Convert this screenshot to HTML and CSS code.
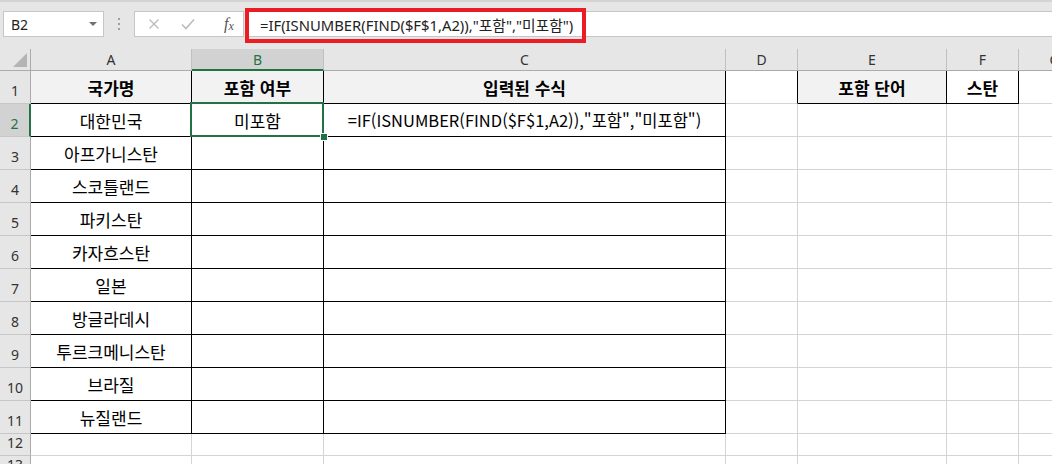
FILE: index.html
```html
<!DOCTYPE html>
<html lang="ko">
<head>
<meta charset="utf-8">
<link rel="stylesheet" href="styles.css">
</head>
<body>
<div class="app">
  <div class="fbar">
    <div class="namebox"><span class="nb-text">B2</span><span class="nb-arrow"></span></div>
    <div class="grip"><i></i><i></i><i></i></div>
    <div class="btns">
      <svg class="ic" width="12" height="12" viewBox="0 0 12 12"><path d="M1.5 1.5L10.5 10.5M10.5 1.5L1.5 10.5" stroke="#bcbcbc" stroke-width="1.4" fill="none"/></svg>
      <svg class="ic" width="14" height="12" viewBox="0 0 14 12"><path d="M1 6.5L5 10.5L13 1.5" stroke="#bcbcbc" stroke-width="1.6" fill="none"/></svg>
      <span class="fx">f<sub>x</sub></span>
    </div>
    <div class="finput"><span class="ftext">=IF(ISNUMBER(FIND($F$1,A2)),"포함","미포함")</span></div>
    <div class="hl"></div>
  </div>
  <div class="sheet">
    <div class="row hdr">
      <div class="corner"><span class="tri"></span></div>
      <div class="ch">A</div><div class="ch sel">B</div><div class="ch">C</div><div class="ch">D</div><div class="ch">E</div><div class="ch">F</div><div class="ch">G</div>
    </div>
    <div class="row">
      <div class="rh">1</div>
      <div class="c t th">국가명</div><div class="c t th">포함 여부</div><div class="c t th">입력된 수식</div><div class="c br"></div><div class="c t th">포함 단어</div><div class="c t bold">스탄</div><div class="c"></div>
    </div>
    <div class="row">
      <div class="rh rsel">2</div>
      <div class="c t">대한민국</div><div class="c t active">미포함</div><div class="c t fml">=IF(ISNUMBER(FIND($F$1,A2)),"포함","미포함")</div><div class="c"></div><div class="c"></div><div class="c"></div><div class="c"></div>
    </div>
    <div class="row">
      <div class="rh">3</div>
      <div class="c t">아프가니스탄</div><div class="c t"></div><div class="c t"></div><div class="c"></div><div class="c"></div><div class="c"></div><div class="c"></div>
    </div>
    <div class="row">
      <div class="rh">4</div>
      <div class="c t">스코틀랜드</div><div class="c t"></div><div class="c t"></div><div class="c"></div><div class="c"></div><div class="c"></div><div class="c"></div>
    </div>
    <div class="row">
      <div class="rh">5</div>
      <div class="c t">파키스탄</div><div class="c t"></div><div class="c t"></div><div class="c"></div><div class="c"></div><div class="c"></div><div class="c"></div>
    </div>
    <div class="row">
      <div class="rh">6</div>
      <div class="c t">카자흐스탄</div><div class="c t"></div><div class="c t"></div><div class="c"></div><div class="c"></div><div class="c"></div><div class="c"></div>
    </div>
    <div class="row">
      <div class="rh">7</div>
      <div class="c t">일본</div><div class="c t"></div><div class="c t"></div><div class="c"></div><div class="c"></div><div class="c"></div><div class="c"></div>
    </div>
    <div class="row">
      <div class="rh">8</div>
      <div class="c t">방글라데시</div><div class="c t"></div><div class="c t"></div><div class="c"></div><div class="c"></div><div class="c"></div><div class="c"></div>
    </div>
    <div class="row">
      <div class="rh">9</div>
      <div class="c t">투르크메니스탄</div><div class="c t"></div><div class="c t"></div><div class="c"></div><div class="c"></div><div class="c"></div><div class="c"></div>
    </div>
    <div class="row">
      <div class="rh">10</div>
      <div class="c t">브라질</div><div class="c t"></div><div class="c t"></div><div class="c"></div><div class="c"></div><div class="c"></div><div class="c"></div>
    </div>
    <div class="row">
      <div class="rh">11</div>
      <div class="c t">뉴질랜드</div><div class="c t"></div><div class="c t"></div><div class="c"></div><div class="c"></div><div class="c"></div><div class="c"></div>
    </div>
    <div class="row short">
      <div class="rh">12</div>
      <div class="c"></div><div class="c"></div><div class="c"></div><div class="c"></div><div class="c"></div><div class="c"></div><div class="c"></div>
    </div>
    <div class="row short">
      <div class="rh">13</div>
      <div class="c"></div><div class="c"></div><div class="c"></div><div class="c"></div><div class="c"></div><div class="c"></div><div class="c"></div>
    </div>
  </div>
</div>
</body>
</html>
```
FILE: styles.css
```css
* { box-sizing: border-box; }
html, body { margin: 0; padding: 0; }
body { width: 1052px; height: 464px; overflow: hidden; background: #fff; font-family: "Noto Sans", "Noto Sans CJK KR", sans-serif; }
.app { width: 1052px; height: 464px; overflow: hidden; }

.fbar { position: relative; height: 49px; background: #e6e6e6; border-top: 2px solid #d4d4d4; display: flex; align-items: flex-start; padding-top: 9px; }
.namebox { margin-left: 3px; width: 101px; height: 26px; background: #fff; border: 1px solid #c6c6c6; display: flex; align-items: center; justify-content: space-between; padding: 0 6px 0 7px; }
.nb-text { font-size: 14px; color: #222; }
.nb-arrow { width: 0; height: 0; border-left: 4px solid transparent; border-right: 4px solid transparent; border-top: 4px solid #707070; }
.grip { width: 30px; height: 26px; display: flex; flex-direction: column; align-items: center; justify-content: center; gap: 3px; }
.grip i { display: block; width: 2px; height: 2px; background: #a0a0a0; }
.btns { width: 110px; height: 26px; background: #fff; border: 1px solid #c6c6c6; display: flex; align-items: center; padding-left: 13px; gap: 21px; }
.fx { font-family: "Liberation Serif", serif; font-style: italic; font-size: 16px; color: #555; margin-left: 8px; line-height: 1; }
.fx sub { font-size: 12px; vertical-align: baseline; position: relative; top: 1px; }
.finput { flex: 1; height: 26px; margin-left: 2px; background: #fff; border-top: 1px solid #c6c6c6; border-bottom: 1px solid #c6c6c6; display: flex; align-items: center; padding-left: 14px; }
.ftext { font-size: 14.8px; color: #222; white-space: nowrap; }
.hl { position: absolute; left: 245px; top: 6px; width: 341px; height: 35px; border: 4px solid #ec1c24; }

.sheet { width: 1052px; overflow: hidden; }
.row { display: grid; grid-template-columns: 31px 161px 132px 402px 72px 149px 72px 72px; width: 1091px; height: 33px; }
.row.hdr { height: 22px; }
.row.short { height: 22px; }

.corner { position: relative; background: #e6e6e6; border-right: 1px solid #ababab; border-bottom: 1px solid #ababab; }
.tri { position: absolute; right: 3px; bottom: 3px; width: 14px; height: 14px; background: #b4b4b4; clip-path: polygon(100% 0, 100% 100%, 0 100%); }
.ch { background: #e6e6e6; border-right: 1px solid #c0c0c0; border-bottom: 1px solid #ababab; display: flex; align-items: center; justify-content: center; font-size: 14px; color: #333; }
.ch.sel { background: #d2d2d2; color: #217346; border-bottom: 2px solid #217346; }
.rh { background: #e6e6e6; border-right: 1px solid #ababab; border-bottom: 1px solid #c6c6c6; display: flex; align-items: flex-end; justify-content: center; font-size: 14px; line-height: 14px; padding-bottom: 5px; color: #333; }
.rh.rsel { background: #d2d2d2; color: #217346; border-right: 2px solid #217346; }

.c { border-right: 1px solid #d4d4d4; border-bottom: 1px solid #d4d4d4; display: flex; align-items: center; justify-content: center; font-family: "Noto Sans CJK KR", sans-serif; font-size: 17px; color: #000; white-space: nowrap; position: relative; }
.c.t { border-right-color: #000; border-bottom-color: #000; }
.c.br { border-right-color: #000; }
.c.th { background: #f2f2f2; font-weight: 700; }
.c.bold { font-weight: 700; }
.c.fml { font-size: 16.5px; }
.c.active::after { content: ""; position: absolute; left: -2px; top: -2px; right: -1px; bottom: -1px; border: 2px solid #217346; z-index: 2; }
.c.active::before { content: ""; position: absolute; right: -4px; bottom: -4px; width: 6px; height: 6px; background: #217346; outline: 1px solid #fff; z-index: 3; }
```
